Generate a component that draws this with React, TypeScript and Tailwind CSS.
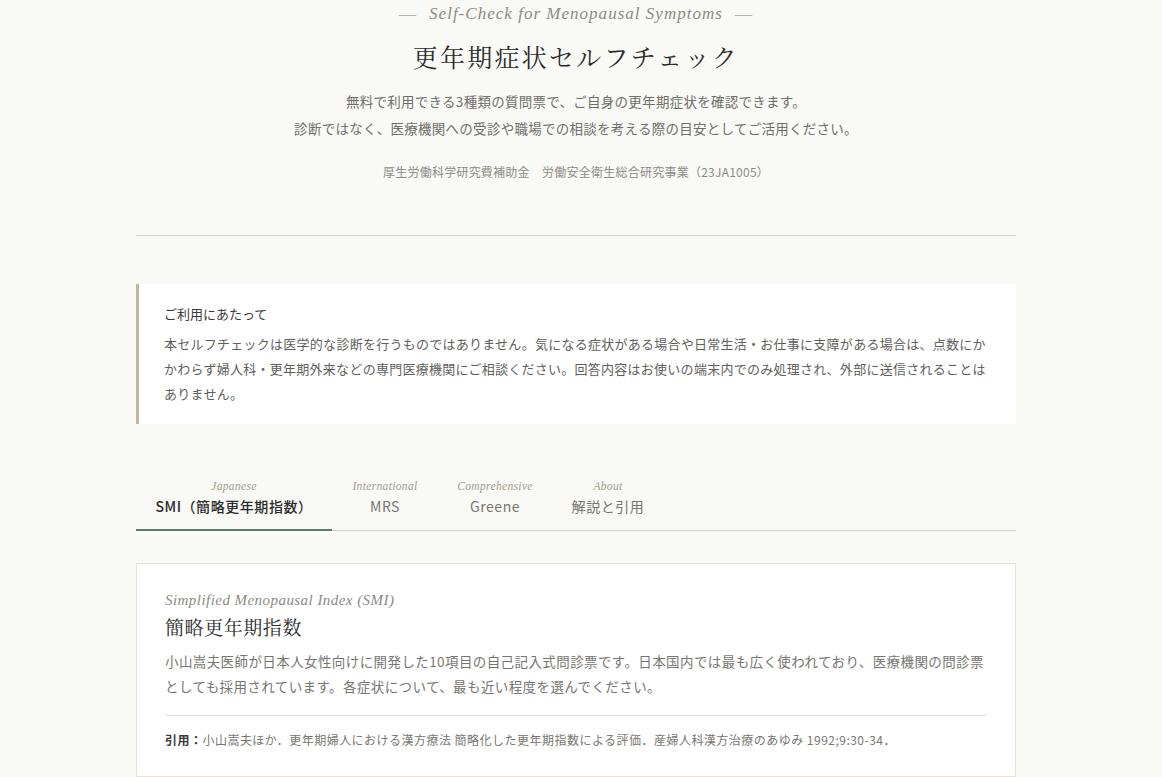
import React, { useState } from "react";

const sans = "font-['Noto_Sans_CJK_JP','Noto_Sans',sans-serif]";
const serifEn = "font-['Liberation_Serif','DejaVu_Serif',serif]";
const serifJa = "font-['Noto_Serif_CJK_JP','Noto_Sans_CJK_JP',serif]";

const tabs = [
  { en: "Japanese", ja: "SMI（簡略更年期指数）", w: "w-[196px]" },
  { en: "International", ja: "MRS", w: "w-[106px]" },
  { en: "Comprehensive", ja: "Greene", w: "w-[114px]" },
  { en: "About", ja: "解説と引用", w: "w-[112px]" },
];

export default function App() {
  const [active, setActive] = useState(0);
  return (
    <div className={`min-h-screen w-[1162px] bg-[#f9f9f5] pr-[10px] ${sans}`}>
      <div className="mx-auto w-[880px]">
        <header className="flex flex-col items-center pt-[2px] text-center">
          <p className={`${serifEn} text-[17px] italic leading-[24px] tracking-[0.06em] text-[#8c8c84]`}>
            <span className="mr-3 not-italic text-[#b5b1a6]">—</span>
            Self-Check for Menopausal Symptoms
            <span className="ml-3 not-italic text-[#b5b1a6]">—</span>
          </p>
          <h1 className={`${serifJa} mt-[14px] text-[25px] leading-[32px] tracking-[0.09em] text-[#2b2b2b]`}>
            更年期症状セルフチェック
          </h1>
          <div className="mt-[16px] text-[13.5px] leading-[27px] tracking-[0.02em] text-[#6f6f6a]">
            <p>無料で利用できる3種類の質問票で、ご自身の更年期症状を確認できます。</p>
            <p>診断ではなく、医療機関への受診や職場での相談を考える際の目安としてご活用ください。</p>
          </div>
          <p className="mt-[21px] text-[12px] leading-[18px] tracking-[0.02em] text-[#8c8c86]">
            厚生労働科学研究費補助金　労働安全衛生総合研究事業（23JA1005）
          </p>
        </header>

        <hr className="mt-[54px] border-0 border-t border-[#d9d4c6]" />

        <section className="mt-[48px] border-l-[3px] border-[#c4b89a] bg-white px-[25px] pb-[18px] pt-[19px]">
          <h2 className="text-[13px] leading-[22px] text-[#3a3a36]">ご利用にあたって</h2>
          <p className="mt-[6px] text-[13px] leading-[25px] tracking-[0.02em] text-[#5f5f5a]">
            本セルフチェックは医学的な診断を行うものではありません。気になる症状がある場合や日常生活・お仕事に支障がある場合は、点数にかかわらず婦人科・更年期外来などの専門医療機関にご相談ください。回答内容はお使いの端末内でのみ処理され、外部に送信されることはありません。
          </p>
        </section>

        <nav className="mt-[55px] flex border-b border-[#d9d4c6]">
          {tabs.map((t, i) => (
            <button
              key={t.en}
              onClick={() => setActive(i)}
              className={`-mb-px flex flex-col items-center pb-[12px] ${t.w} ${
                i === active ? "border-b-2 border-[#5f7a6a]" : "border-b-2 border-transparent"
              }`}
            >
              <span className={`${serifEn} text-[11.5px] italic leading-[14px] tracking-[0.03em] text-[#a09c92]`}>{t.en}</span>
              <span
                className={`mt-[2px] text-[14px] leading-[22px] tracking-[0.04em] ${
                  i === active ? "font-medium text-[#2b2b2b]" : "text-[#77766f]"
                }`}
              >
                {t.ja}
              </span>
            </button>
          ))}
        </nav>

        <section className="mt-[32px] border border-[#e6e1d4] bg-white px-[28px] pb-[26px] pt-[25px]">
          <p className={`${serifEn} text-[15px] italic leading-[22px] tracking-[0.03em] text-[#8c8a82]`}>
            Simplified Menopausal Index (SMI)
          </p>
          <h3 className={`${serifJa} mt-[2px] text-[19px] leading-[28px] tracking-[0.03em] text-[#2b2b2b]`}>簡略更年期指数</h3>
          <p className="mt-[8px] text-[13.5px] leading-[25px] tracking-[0.03em] text-[#77766f]">
            小山嵩夫医師が日本人女性向けに開発した10項目の自己記入式問診票です。日本国内では最も広く使われており、医療機関の問診票としても採用されています。各症状について、最も近い程度を選んでください。
          </p>
          <hr className="mt-[16px] border-0 border-t border-[#e4dfd2]" />
          <p className="mt-[14px] text-[12px] leading-[20px] tracking-[0.04em] text-[#77766f]">
            <span className="font-bold text-[#3a3a36]">引用：</span>
            小山嵩夫ほか．更年期婦人における漢方療法 簡略化した更年期指数による評価．産婦人科漢方治療のあゆみ 1992;9:30-34．
          </p>
        </section>
      </div>
    </div>
  );
}
